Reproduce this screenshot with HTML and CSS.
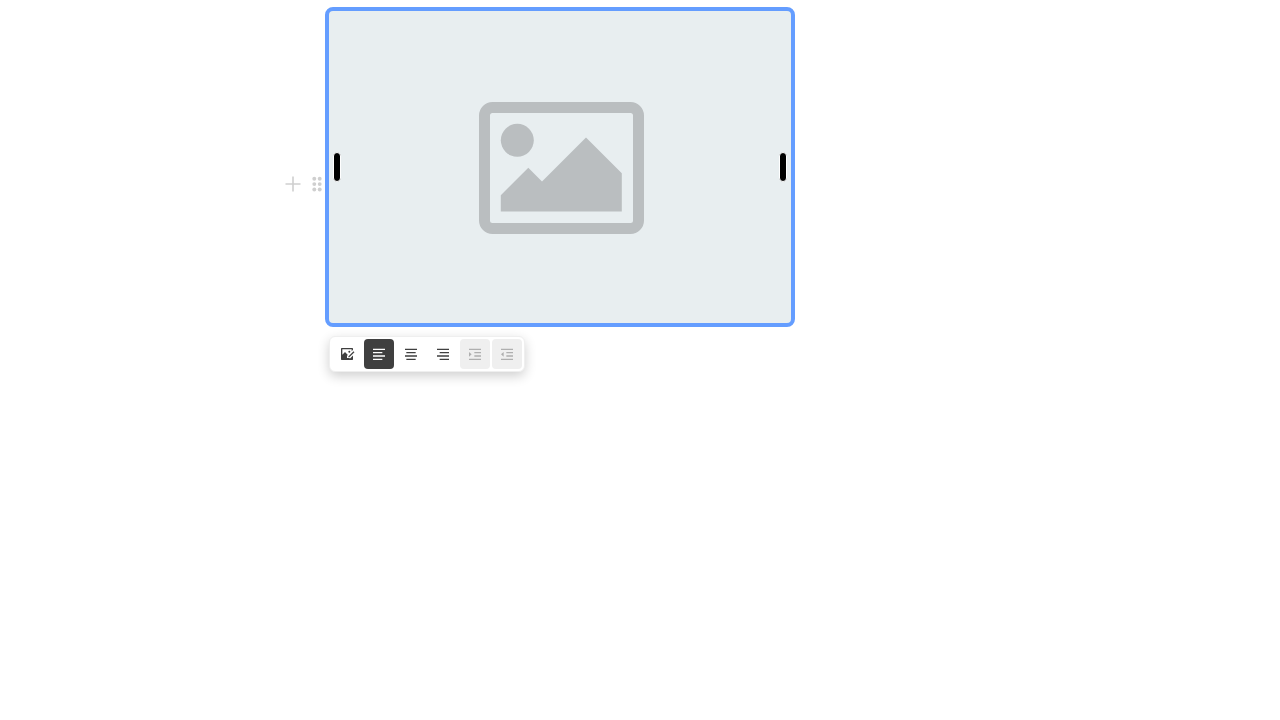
FILE: index.html
```
<!DOCTYPE html>
<html lang="en">
<head>
<meta charset="utf-8">
<meta name="viewport" content="width=device-width, initial-scale=1">
<title>Editor</title>
<link rel="stylesheet" href="styles.css">
</head>
<body>
<main class="editor">
  <div class="block">
    <div class="side-menu">
      <button class="side-button" type="button" aria-label="Add block">
        <svg viewBox="0 0 24 24" width="24" height="24" fill="none" stroke="currentColor" stroke-width="1.600"><path d="M12 4.500v15M4.500 12h15"/></svg>
      </button>
      <button class="side-button" type="button" aria-label="Open block menu">
        <svg viewBox="0 0 24 24" width="24" height="24" fill="currentColor"><circle cx="9.3" cy="6.700" r="1.950"/><circle cx="14.7" cy="6.700" r="1.950"/><circle cx="9.3" cy="12.100" r="1.950"/><circle cx="14.7" cy="12.100" r="1.950"/><circle cx="9.3" cy="17.500" r="1.950"/><circle cx="14.7" cy="17.500" r="1.950"/></svg>
      </button>
    </div>
    <div class="media">
      <svg class="placeholder" viewBox="0 0 165 132" role="img" aria-label="Image placeholder">
        <path fill-rule="evenodd" d="M13.500 0H151.500A13.500 13.500 0 0 1 165 13.500V118.500A13.500 13.500 0 0 1 151.500 132H13.500A13.500 13.500 0 0 1 0 118.500V13.500A13.500 13.500 0 0 1 13.500 0ZM13.500 11Q11 11 11 13.500V118.500Q11 121 13.500 121H151.500Q154 121 154 118.500V13.500Q154 11 151.500 11Z"/>
        <circle cx="38.300" cy="38.300" r="16.500"/>
        <path d="M21.800 93.300L49.300 65.800L63 79.500L107 35.500L142.800 71.300V109.500H21.800Z"/>
      </svg>
      <div class="handle handle-left"></div>
      <div class="handle handle-right"></div>
    </div>
  </div>
  <div class="toolbar" role="toolbar" aria-label="Formatting">
    <button class="tool" type="button" aria-label="Replace image">
      <svg viewBox="0 0 24 24"><path fill-rule="evenodd" d="M4 3H20Q21 3 21 4V5.760L19 7.760V5H5V13.100L9 9.100L13.330 13.430L12 14.760V19H16.240L21 14.240V20Q21 21 20 21H4Q3 21 3 20V4Q3 3 4 3ZM21.780 7.810L23.190 9.220L15.410 17L14 17V15.590ZM15.500 7A1.500 1.500 0 1 1 15.500 10A1.500 1.500 0 1 1 15.500 7Z"/><path d="M11.500 18H17L15 20H11.500Z"/></svg>
    </button>
    <button class="tool active" type="button" aria-label="Align left" aria-pressed="true">
      <svg viewBox="0 0 24 24"><path d="M3 4H21V6H3ZM3 19H17V21H3ZM3 14H21V16H3ZM3 9H17V11H3Z"/></svg>
    </button>
    <button class="tool" type="button" aria-label="Align center">
      <svg viewBox="0 0 24 24"><path d="M3 4H21V6H3ZM5 19H19V21H5ZM3 14H21V16H3ZM5 9H19V11H5Z"/></svg>
    </button>
    <button class="tool" type="button" aria-label="Align right">
      <svg viewBox="0 0 24 24"><path d="M3 4H21V6H3ZM7 19H21V21H7ZM3 14H21V16H3ZM7 9H21V11H7Z"/></svg>
    </button>
    <button class="tool" type="button" aria-label="Nest block" disabled>
      <svg viewBox="0 0 24 24"><path d="M3 4H21V6H3ZM3 19H21V21H3ZM11 14H21V16H11ZM11 9H21V11H11ZM7 12.500L3 16V9Z"/></svg>
    </button>
    <button class="tool" type="button" aria-label="Unnest block" disabled>
      <svg viewBox="0 0 24 24"><path d="M3 4H21V6H3ZM3 19H21V21H3ZM11 14H21V16H11ZM11 9H21V11H11ZM3 12.500L7 9V16Z"/></svg>
    </button>
  </div>
</main>
</body>
</html>
```
FILE: styles.css
```
* {
  box-sizing: border-box;
}

body {
  margin: 0;
  background: #fff;
  font-family: Inter, "Liberation Sans", sans-serif;
}

.editor {
  max-width: 795px;
  min-height: 100vh;
  margin-right: auto;
  padding-top: 7px;
}

.block {
  display: flex;
  justify-content: flex-end;
  align-items: center;
}

.side-menu {
  display: flex;
  padding-top: 34px;
  margin-right: -4px;
}

.side-button {
  display: flex;
  padding: 0;
  border: 0;
  background: transparent;
  color: #cfcfcf;
}

.media {
  position: relative;
  display: flex;
  flex: 0 1 470px;
  align-items: center;
  justify-content: center;
  aspect-ratio: 470 / 320;
  border: 4px solid #649dff;
  border-radius: 8px;
  background: #e8eef0;
}

.placeholder {
  width: 165px;
  max-width: 36%;
  margin: 2px 0 0 3px;
  fill: #babec0;
}

.handle {
  position: absolute;
  top: 50%;
  width: 8px;
  height: 30px;
  transform: translateY(-50%);
  border: 1px solid #fff;
  border-radius: 4px;
  background: #000;
}

.handle-left {
  left: 4px;
}

.handle-right {
  right: 4px;
}

.toolbar {
  display: flex;
  gap: 2px;
  width: fit-content;
  margin: 9px 0 0 329px;
  padding: 2px;
  border: 1px solid #efefef;
  border-radius: 6px;
  background: #fff;
  box-shadow: 0 4px 12px #cfcfcf;
}

.tool {
  display: flex;
  align-items: center;
  justify-content: center;
  width: 30px;
  height: 30px;
  padding: 0;
  border: 0;
  border-radius: 4px;
  background: #fff;
  color: #3f3f3f;
}

.tool svg {
  width: 16px;
  height: 16px;
  fill: currentColor;
}

.tool.active {
  background: #3f3f3f;
  color: #fff;
}

.tool:disabled {
  background: #efefef;
  color: #afafaf;
}
```
